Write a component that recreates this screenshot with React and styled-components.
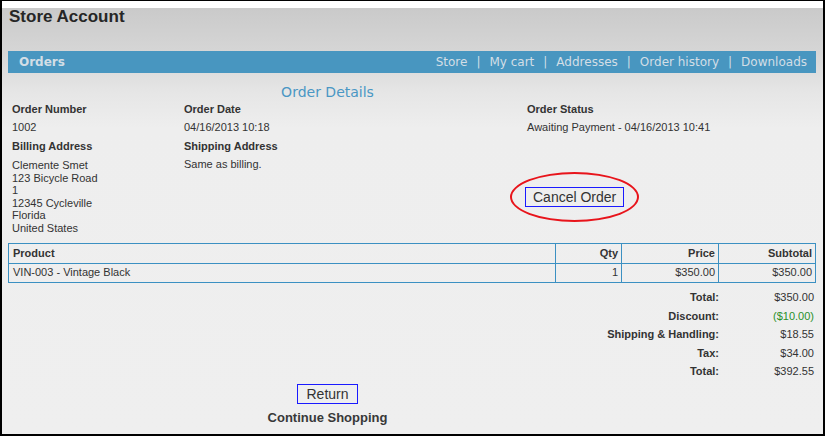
import React from "react";
import styled, { createGlobalStyle } from "styled-components";

const Global = createGlobalStyle`
  html, body { margin: 0; padding: 0; background: #fff; }
  body { font-family: "Liberation Sans", Arial, sans-serif; color: #333; }
`;

const Frame = styled.div`
  box-sizing: border-box;
  width: 825px;
  height: 436px;
  border-top: 1px solid #000;
  border-left: 2px solid #000;
  border-right: 2px solid #000;
  border-bottom: 2px solid #000;
  background: #fff;
  padding-top: 7px;
  overflow: hidden;
`;

const Page = styled.div`
  height: 100%;
  background: linear-gradient(#cacaca 0px, #d6d6d6 45px, #e6e6e6 85px, #eeeeee 120px, #efefef 100%);
`;

const Title = styled.h1`
  margin: 0;
  padding-left: 7px;
  font-size: 17px;
  line-height: 17px;
  font-weight: bold;
  color: #262626;
`;

const Content = styled.div`
  margin: 26px 7px 0 6px;
`;

const Bar = styled.div`
  height: 22px;
  background: #4896c0;
  display: flex;
  align-items: center;
  justify-content: space-between;
  padding: 0 9px 0 11px;
  font-family: "DejaVu Sans", Verdana, sans-serif;
  font-size: 12px;
  color: #d3dee6;
`;

const BarTitle = styled.span`
  font-weight: bold;
`;

const Nav = styled.nav`
  display: flex;
  align-items: center;
`;

const NavLink = styled.span``;

const Sep = styled.span`
  padding: 0 9px;
`;

const Main = styled.div`
  width: 639px;
`;

const Heading = styled.div`
  margin-top: 11px;
  text-align: center;
  font-family: "DejaVu Sans", Verdana, sans-serif;
  font-size: 14px;
  line-height: 16px;
  color: #4a97c4;
`;

const Info = styled.div`
  display: grid;
  grid-template-columns: 172px 343px 1fr;
  row-gap: 5.5px;
  padding-left: 4px;
  margin-top: 2.5px;
  font-size: 11px;
  line-height: 13px;
`;

const Label = styled.div`
  font-weight: bold;
`;

const Value = styled.div``;

const Address = styled.div`
  margin-top: 1px;
  line-height: 12.5px;
`;

const ActionCell = styled.div`
  padding-top: 29px;
  margin-left: -2px;
`;

const Highlight = styled.span`
  position: relative;
  display: inline-block;
`;

const Ellipse = styled.span`
  position: absolute;
  left: -15px;
  right: -15px;
  top: -15px;
  bottom: -15px;
  border: 2px solid #e8141b;
  border-radius: 50%;
  pointer-events: none;
`;

const Button = styled.button`
  box-sizing: border-box;
  height: 20px;
  padding: 0 ${(p) => p.$px || 7}px;
  border: 1px solid #1a1aff;
  background: transparent;
  font-family: "Liberation Sans", Arial, sans-serif;
  font-size: 14px;
  line-height: 18px;
  color: #333;
  cursor: pointer;
`;

const Table = styled.table`
  width: 808px;
  margin-top: 8.5px;
  border-collapse: collapse;
  font-size: 11px;
  line-height: 13px;
  table-layout: fixed;
`;

const Th = styled.th`
  border: 1px solid #3b90c2;
  padding: 1px 3px 0 4px;
  height: 18px;
  font-weight: bold;
  text-align: ${(p) => p.$align || "left"};
  width: ${(p) => (p.$w ? p.$w + "px" : "auto")};
`;

const Td = styled.td`
  border: 1px solid #3b90c2;
  padding: 0 3px 0 4px;
  height: 18px;
  text-align: ${(p) => p.$align || "left"};
`;

const Totals = styled.div`
  display: grid;
  grid-template-columns: 1fr 97px;
  row-gap: 5.6px;
  margin-top: 8.5px;
  font-size: 11px;
  line-height: 13px;
`;

const TotalLabel = styled.div`
  font-weight: bold;
  text-align: right;
`;

const TotalValue = styled.div`
  text-align: right;
  padding-right: 2px;
  color: ${(p) => p.$color || "#333"};
`;

const Footer = styled.div`
  width: 639px;
  display: flex;
  flex-direction: column;
  align-items: center;
  margin-top: 6px;
`;

const Continue = styled.div`
  margin-top: 6px;
  font-size: 13px;
  line-height: 15px;
  font-weight: bold;
  color: #383838;
`;

const navItems = ["Store", "My cart", "Addresses", "Order history", "Downloads"];

const totals = [
  ["Total:", "$350.00"],
  ["Discount:", "($10.00)", "#2a8f2a"],
  ["Shipping & Handling:", "$18.55"],
  ["Tax:", "$34.00"],
  ["Total:", "$392.55"],
];

export default function App() {
  return (
    <>
      <Global />
      <Frame>
        <Page>
          <Title>Store Account</Title>
          <Content>
            <Bar>
              <BarTitle>Orders</BarTitle>
              <Nav>
                {navItems.map((n, i) => (
                  <React.Fragment key={n}>
                    {i > 0 && <Sep>|</Sep>}
                    <NavLink>{n}</NavLink>
                  </React.Fragment>
                ))}
              </Nav>
            </Bar>
            <Main>
              <Heading>Order Details</Heading>
            </Main>
            <Info>
              <Label>Order Number</Label>
              <Label>Order Date</Label>
              <Label>Order Status</Label>
              <Value>1002</Value>
              <Value>04/16/2013 10:18</Value>
              <Value>Awaiting Payment - 04/16/2013 10:41</Value>
              <Label>Billing Address</Label>
              <Label>Shipping Address</Label>
              <div />
              <Address>
                Clemente Smet
                <br />
                123 Bicycle Road
                <br />1
                <br />
                12345 Cycleville
                <br />
                Florida
                <br />
                United States
              </Address>
              <Value>Same as billing.</Value>
              <ActionCell>
                <Highlight>
                  <Button>Cancel Order</Button>
                  <Ellipse />
                </Highlight>
              </ActionCell>
            </Info>
            <Table>
              <thead>
                <tr>
                  <Th>Product</Th>
                  <Th $w={58} $align="right">Qty</Th>
                  <Th $w={89} $align="right">Price</Th>
                  <Th $w={89} $align="right">Subtotal</Th>
                </tr>
              </thead>
              <tbody>
                <tr>
                  <Td>VIN-003 - Vintage Black</Td>
                  <Td $align="right">1</Td>
                  <Td $align="right">$350.00</Td>
                  <Td $align="right">$350.00</Td>
                </tr>
              </tbody>
            </Table>
            <Totals>
              {totals.map(([l, v, c], i) => (
                <React.Fragment key={i}>
                  <TotalLabel>{l}</TotalLabel>
                  <TotalValue $color={c}>{v}</TotalValue>
                </React.Fragment>
              ))}
            </Totals>
            <Footer>
              <Button $px={8}>Return</Button>
              <Continue>Continue Shopping</Continue>
            </Footer>
          </Content>
        </Page>
      </Frame>
    </>
  );
}
